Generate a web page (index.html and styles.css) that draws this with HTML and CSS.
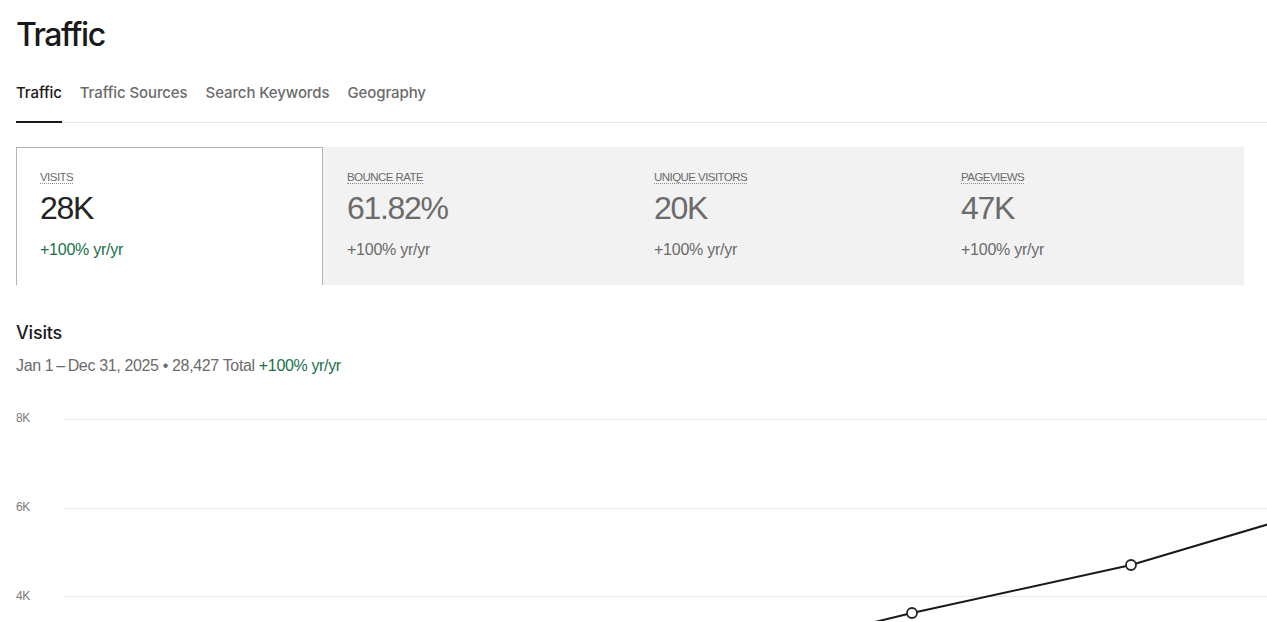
FILE: index.html
```html
<!DOCTYPE html>
<html lang="en">
<head>
<meta charset="utf-8">
<title>Traffic</title>
<link rel="stylesheet" href="styles.css">
</head>
<body>
<main class="page">
  <h1 class="title">Traffic</h1>
  <nav class="tabs">
    <a class="tab active">Traffic</a>
    <a class="tab">Traffic Sources</a>
    <a class="tab">Search Keywords</a>
    <a class="tab">Geography</a>
  </nav>

  <section class="metrics">
    <div class="metric active">
      <span class="metric-label">VISITS</span>
      <div class="metric-value">28K</div>
      <div class="metric-change up">+100% yr/yr</div>
    </div>
    <div class="metric">
      <span class="metric-label">BOUNCE RATE</span>
      <div class="metric-value">61.82%</div>
      <div class="metric-change">+100% yr/yr</div>
    </div>
    <div class="metric">
      <span class="metric-label">UNIQUE VISITORS</span>
      <div class="metric-value">20K</div>
      <div class="metric-change">+100% yr/yr</div>
    </div>
    <div class="metric">
      <span class="metric-label">PAGEVIEWS</span>
      <div class="metric-value">47K</div>
      <div class="metric-change">+100% yr/yr</div>
    </div>
  </section>

  <section class="chart-section">
    <h2 class="chart-title">Visits</h2>
    <p class="chart-sub">Jan 1&thinsp;–&thinsp;Dec 31, 2025 • 28,427 Total <span class="up">+100% yr/yr</span></p>
    <div class="chart">
      <div class="axis">
        <span class="tick">8K</span>
        <span class="tick">6K</span>
        <span class="tick">4K</span>
      </div>
      <svg class="plot" width="1203" height="212" viewBox="0 0 1203 212">
        <line class="grid" x1="0" y1="10.5" x2="1203" y2="10.5"/>
        <line class="grid" x1="0" y1="99.5" x2="1203" y2="99.5"/>
        <line class="grid" x1="0" y1="187.5" x2="1203" y2="187.5"/>
        <polyline class="series" points="629,257 848,204 1067,156 1286,91"/>
        <circle class="dot" cx="848" cy="204" r="5"/>
        <circle class="dot" cx="1067" cy="156" r="5"/>
      </svg>
    </div>
  </section>
</main>
</body>
</html>
```

FILE: styles.css
```css
html, body {
  margin: 0;
  padding: 0;
  background: #ffffff;
  overflow: hidden;
}

body {
  font-family: "Liberation Sans", Arial, sans-serif;
  color: #242424;
}

.page {
  padding: 0 0 0 16px;
}

.title {
  font-family: Inter, "Liberation Sans", sans-serif;
  font-size: 32px;
  font-weight: 500;
  letter-spacing: -1.5px;
  line-height: 40px;
  margin: 0;
  padding-top: 15px;
  color: #191919;
}

.tabs {
  display: flex;
  gap: 18px;
  margin-top: 28px;
  border-bottom: 1px solid #e6e6e6;
}

.tab {
  font-family: Inter, "Liberation Sans", sans-serif;
  font-size: 15px;
  font-weight: 500;
  letter-spacing: -0.1px;
  color: #6b6b6b;
  line-height: 20px;
  padding-bottom: 18px;
  border-bottom: 2px solid transparent;
  margin-bottom: -1px;
}

.tab.active {
  color: #191919;
  border-bottom-color: #191919;
}

.metrics {
  display: grid;
  grid-template-columns: repeat(4, 307px);
  margin-top: 24px;
  background: #f2f2f2;
  width: 1228px;
}

.metric {
  height: 138px;
  box-sizing: border-box;
  padding: 20px 24px 0 24px;
}

.metric.active {
  background: #ffffff;
  border: 1px solid #b3b3b3;
  border-bottom: none;
  padding-left: 23px;
  padding-top: 19px;
}

.metric-label {
  display: inline-block;
  font-size: 11.5px;
  letter-spacing: -0.55px;
  color: #6b6b6b;
  line-height: 12px;
  border-bottom: 1px dotted #8a8a8a;
}

.metric-value {
  font-size: 32px;
  letter-spacing: -1.3px;
  line-height: 38px;
  margin-top: 4px;
  color: #6b6b6b;
}

.metric.active .metric-value {
  color: #242424;
}

.metric-change {
  font-size: 16px;
  letter-spacing: -0.25px;
  line-height: 20px;
  margin-top: 13px;
  color: #6b6b6b;
}

.up {
  color: #19704a !important;
}

.chart-section {
  margin-top: 36px;
}

.chart-title {
  font-family: Inter, "Liberation Sans", sans-serif;
  font-size: 18px;
  font-weight: 500;
  letter-spacing: -0.2px;
  line-height: 24px;
  color: #191919;
  margin: 0;
}

.chart-sub {
  font-size: 16px;
  letter-spacing: -0.35px;
  line-height: 20px;
  color: #6b6b6b;
  margin: 11px 0 0 0;
}

.chart {
  display: flex;
  margin-top: 33px;
}

.axis {
  width: 48px;
  display: flex;
  flex-direction: column;
  gap: 75px;
  padding-top: 2px;
}

.tick {
  font-size: 12px;
  line-height: 14px;
  color: #7a7a7a;
  letter-spacing: -0.3px;
}

.plot {
  display: block;
  overflow: hidden;
}

.grid {
  stroke: #e8e8e8;
  stroke-width: 1;
}

.series {
  fill: none;
  stroke: #191919;
  stroke-width: 2;
}

.dot {
  fill: #ffffff;
  stroke: #242424;
  stroke-width: 1.8;
}
```
